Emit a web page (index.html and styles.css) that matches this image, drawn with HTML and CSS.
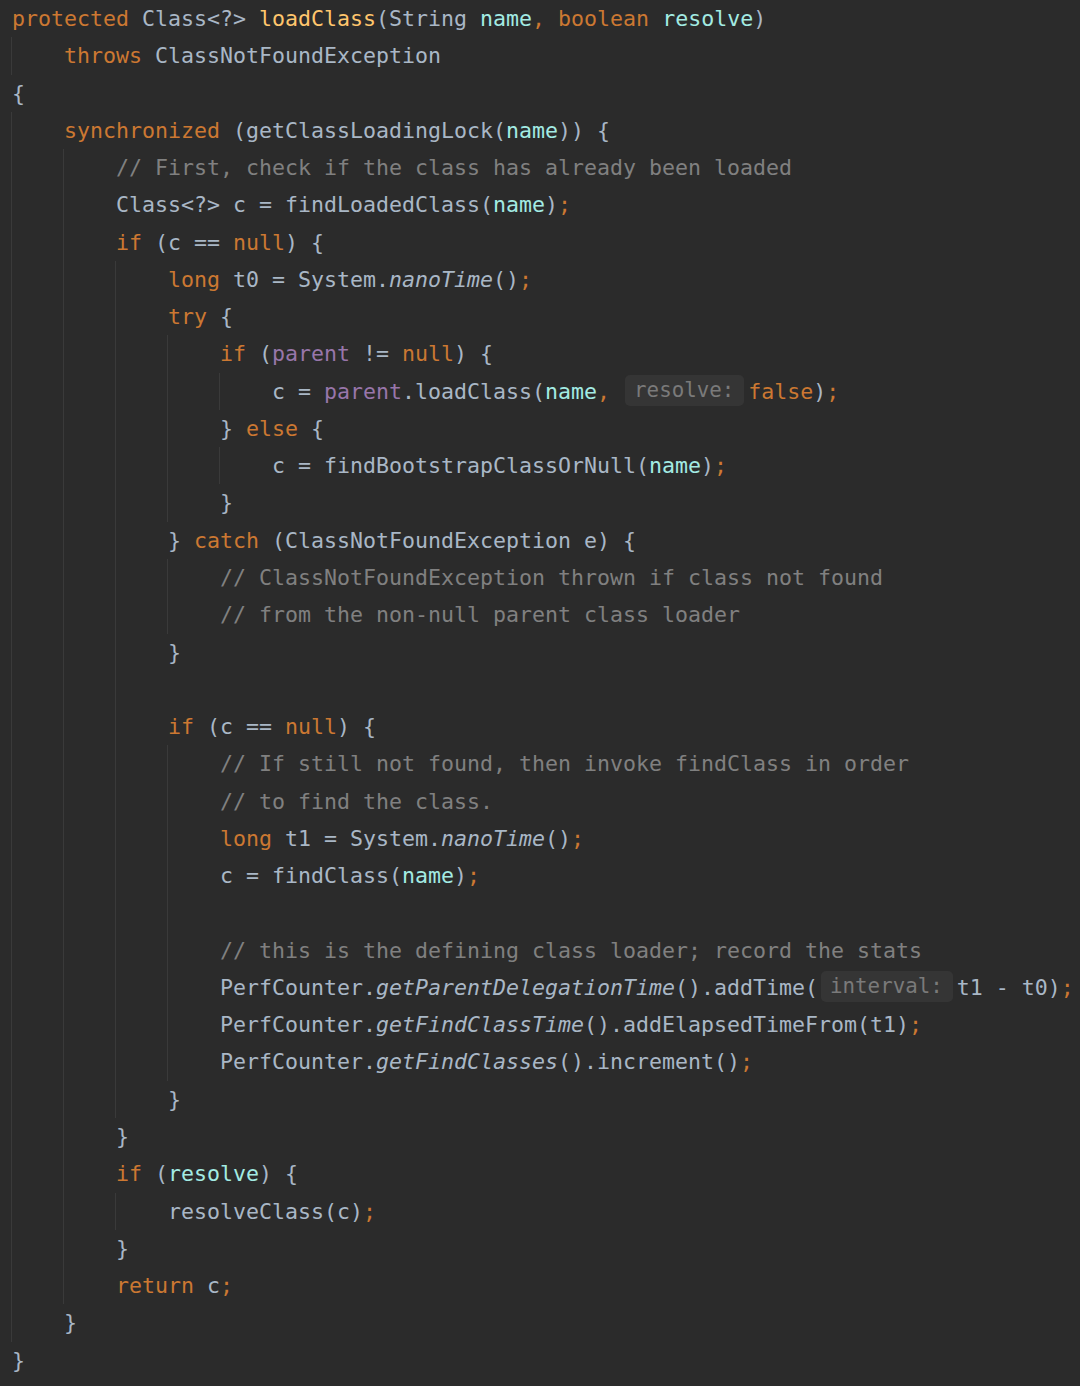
FILE: index.html
```html
<!DOCTYPE html>
<html>
<head>
<meta charset="utf-8">
<link rel="stylesheet" href="styles.css">
</head>
<body>
<div class="code">
<div class="ln"><span class="k">protected</span> Class&lt;?&gt; <span class="m">loadClass</span>(String <span class="p">name</span><span class="k">,</span> <span class="k">boolean</span> <span class="p">resolve</span>)</div>
<div class="blk">
  <div class="ln"><span class="k">throws</span> ClassNotFoundException</div>
</div>
<div class="ln">{</div>
<div class="blk">
  <div class="ln"><span class="k">synchronized</span> (getClassLoadingLock(<span class="p">name</span>)) {</div>
  <div class="blk">
    <div class="ln"><span class="c">// First, check if the class has already been loaded</span></div>
    <div class="ln">Class&lt;?&gt; c = findLoadedClass(<span class="p">name</span>)<span class="k">;</span></div>
    <div class="ln"><span class="k">if</span> (c == <span class="k">null</span>) {</div>
    <div class="blk">
      <div class="ln"><span class="k">long</span> t0 = System.<span class="i">nanoTime</span>()<span class="k">;</span></div>
      <div class="ln"><span class="k">try</span> {</div>
      <div class="blk">
        <div class="ln"><span class="k">if</span> (<span class="f">parent</span> != <span class="k">null</span>) {</div>
        <div class="blk">
          <div class="ln">c = <span class="f">parent</span>.loadClass(<span class="p">name</span><span class="k">,</span> <span class="h">resolve:</span><span class="k">false</span>)<span class="k">;</span></div>
        </div>
        <div class="ln">} <span class="k">else</span> {</div>
        <div class="blk">
          <div class="ln">c = findBootstrapClassOrNull(<span class="p">name</span>)<span class="k">;</span></div>
        </div>
        <div class="ln">}</div>
      </div>
      <div class="ln">} <span class="k">catch</span> (ClassNotFoundException e) {</div>
      <div class="blk">
        <div class="ln"><span class="c">// ClassNotFoundException thrown if class not found</span></div>
        <div class="ln"><span class="c">// from the non-null parent class loader</span></div>
      </div>
      <div class="ln">}</div>
      <div class="ln"></div>
      <div class="ln"><span class="k">if</span> (c == <span class="k">null</span>) {</div>
      <div class="blk">
        <div class="ln"><span class="c">// If still not found, then invoke findClass in order</span></div>
        <div class="ln"><span class="c">// to find the class.</span></div>
        <div class="ln"><span class="k">long</span> t1 = System.<span class="i">nanoTime</span>()<span class="k">;</span></div>
        <div class="ln">c = findClass(<span class="p">name</span>)<span class="k">;</span></div>
        <div class="ln"></div>
        <div class="ln"><span class="c">// this is the defining class loader; record the stats</span></div>
        <div class="ln">PerfCounter.<span class="i">getParentDelegationTime</span>().addTime(<span class="h hi">interval:</span>t1 - t0)<span class="k">;</span></div>
        <div class="ln">PerfCounter.<span class="i">getFindClassTime</span>().addElapsedTimeFrom(t1)<span class="k">;</span></div>
        <div class="ln">PerfCounter.<span class="i">getFindClasses</span>().increment()<span class="k">;</span></div>
      </div>
      <div class="ln">}</div>
    </div>
    <div class="ln">}</div>
    <div class="ln"><span class="k">if</span> (<span class="p">resolve</span>) {</div>
    <div class="blk">
      <div class="ln">resolveClass(c)<span class="k">;</span></div>
    </div>
    <div class="ln">}</div>
    <div class="ln"><span class="k">return</span> c<span class="k">;</span></div>
  </div>
  <div class="ln">}</div>
</div>
<div class="ln">}</div>
</div>
</body>
</html>
```
FILE: styles.css
```css
html, body {
  margin: 0;
  padding: 0;
  background: #2b2b2b;
  overflow: hidden;
}
.code {
  padding: 0 0 0 12px;
  font-family: "DejaVu Sans Mono", "Liberation Mono", monospace;
  font-size: 21.6px;
  color: #a9b7c6;
}
.ln {
  height: 37.28px;
  line-height: 37.28px;
  white-space: pre;
}
.blk {
  margin-left: -1px;
  border-left: 1px solid #3a3a3a;
  padding-left: 52px;
}
.k { color: #cc7832; }
.m { color: #ffc66d; }
.p { color: #a3ebe3; }
.f { color: #9876aa; }
.c { color: #808080; }
.i { font-style: italic; }
.h {
  display: inline-block;
  vertical-align: top;
  margin: 2px 4px 0 2px;
  height: 31px;
  line-height: 31px;
  padding: 0 10px 0 9px;
  border-radius: 5px;
  background: #353535;
  color: #7a7a7a;
  font-size: 20.8px;
}
.hi { margin-left: 3px; }
```
